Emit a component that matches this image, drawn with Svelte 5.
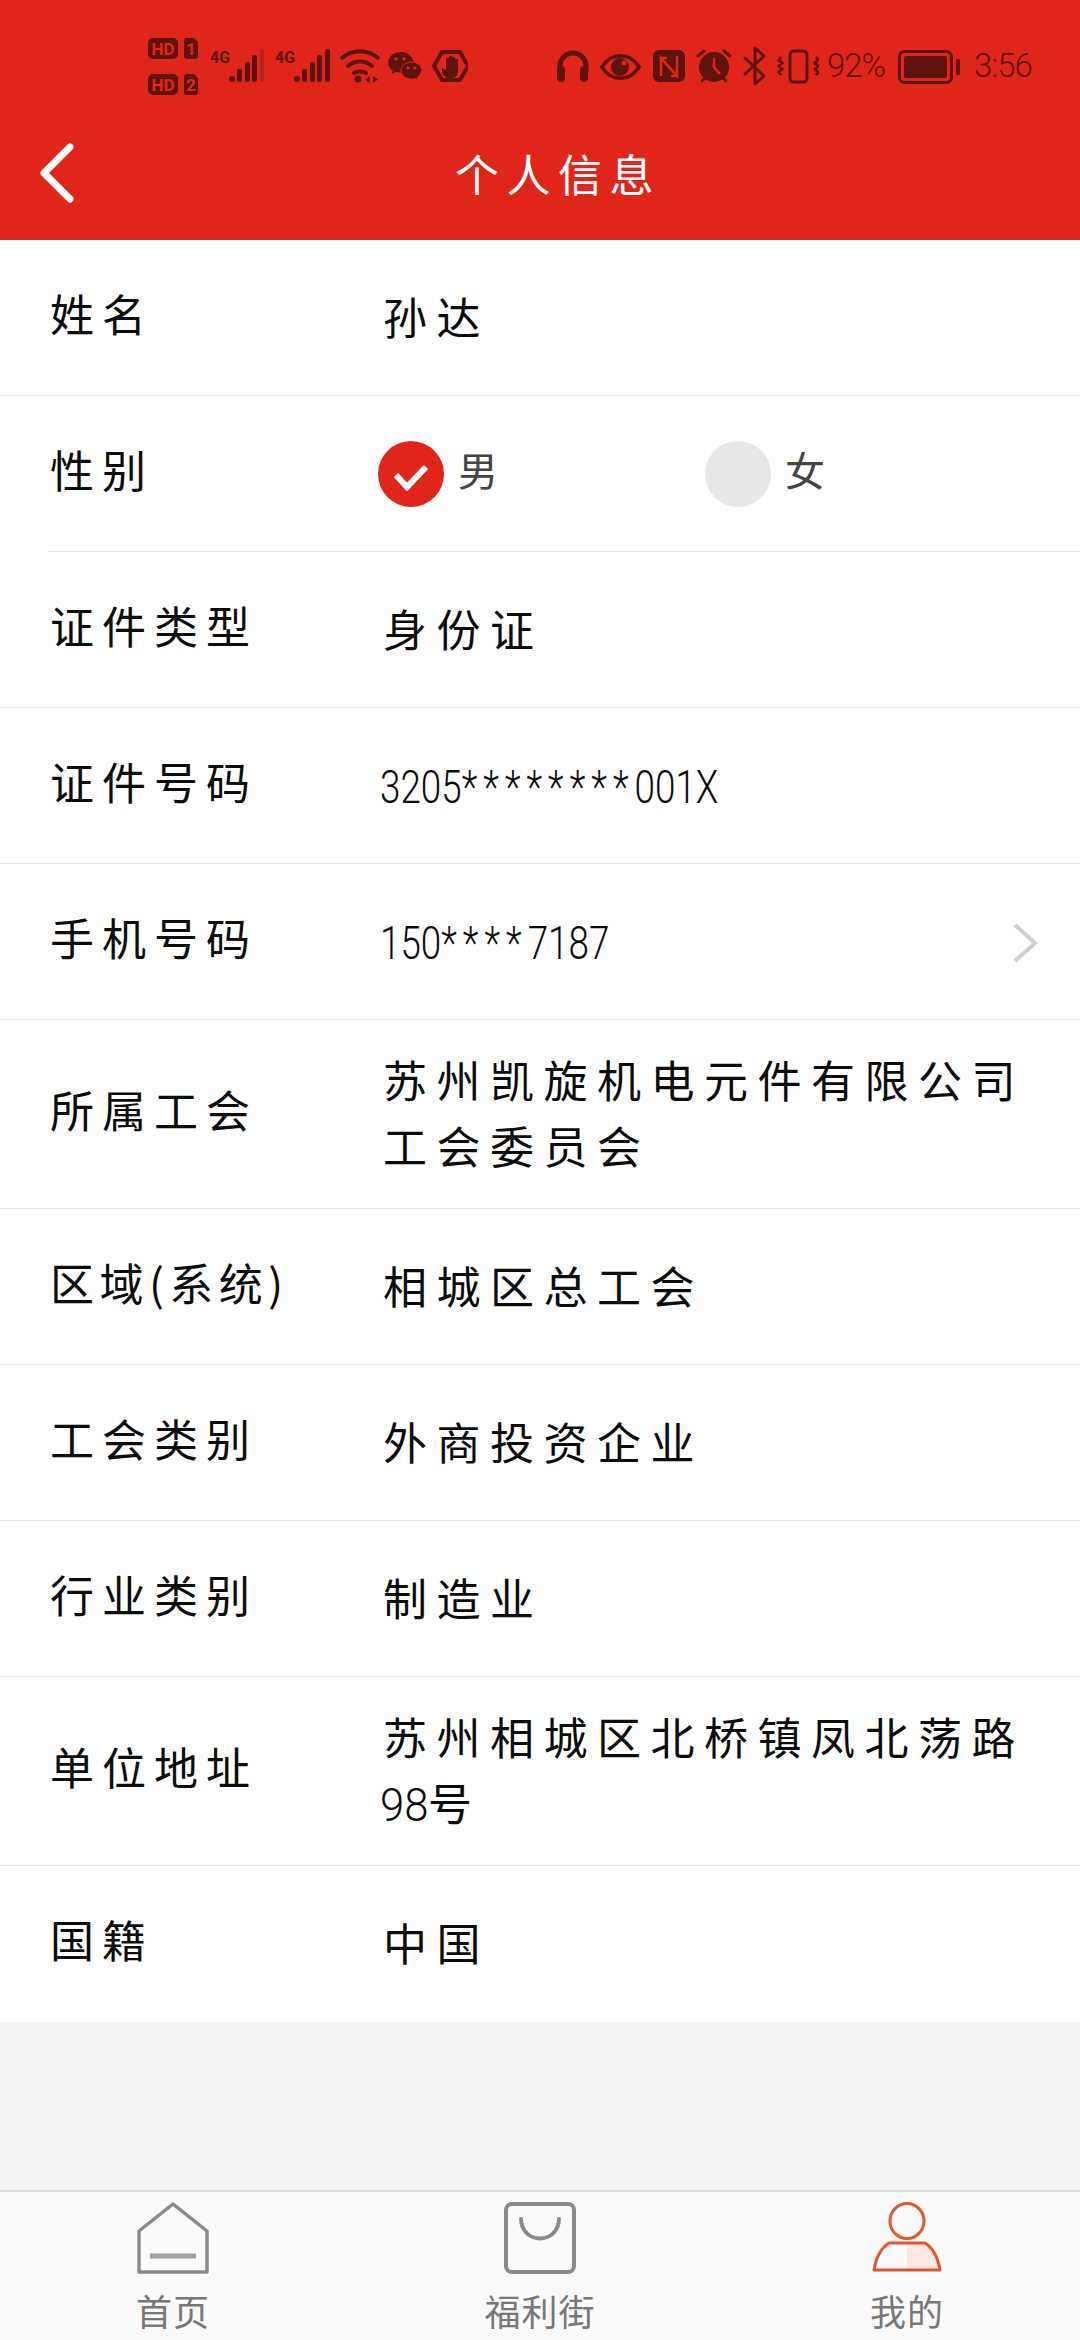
<script lang="ts">
type Row = { label: string; value?: string; num?: boolean; more?: boolean; inset?: boolean; gender?: boolean };

const rows: Row[] = [
  { label: '姓名', value: '孙达' },
  { label: '性别', gender: true, inset: true },
  { label: '证件类型', value: '身份证' },
  { label: '证件号码', value: '3205********001X', num: true },
  { label: '手机号码', value: '150****7187', num: true, more: true },
  { label: '所属工会', value: '苏州凯旋机电元件有限公司工会委员会' },
  { label: '区域(系统)', value: '相城区总工会' },
  { label: '工会类别', value: '外商投资企业' },
  { label: '行业类别', value: '制造业' },
  { label: '单位地址', value: '苏州相城区北桥镇凤北荡路98号' },
  { label: '国籍', value: '中国' },
];

// digits keep the narrow latin face without the wide CJK tracking
const parts = (v: string) => v.split(/(\d+)/).filter(Boolean);
// masked ids: the stars sit wider apart than the digits
const masked = (v: string) => v.split(/(\*+)/).filter(Boolean);
</script>

<div class="page">
  <header class="top">
    <div class="status">
      <svg class="left" width="320" height="60" viewBox="148 36 320 60" fill="#5e130c">
        <rect x="148" y="38" width="30" height="21" rx="5" />
        <text x="163" y="54.500" class="hd">HD</text>
        <path d="M184 41a3 3 0 0 1 3-3h7l4 4v14a3 3 0 0 1-3 3h-8a3 3 0 0 1-3-3z" />
        <text x="191" y="54.500" class="hd">1</text>
        <rect x="148" y="74" width="30" height="21" rx="5" />
        <text x="163" y="90.500" class="hd">HD</text>
        <path d="M184 77a3 3 0 0 1 3-3h7l4 4v14a3 3 0 0 1-3 3h-8a3 3 0 0 1-3-3z" />
        <text x="191" y="90.500" class="hd">2</text>
        <text x="220" y="63" class="g">4G</text>
        <circle cx="232" cy="79" r="3" />
        <rect x="237" y="69" width="5" height="13" rx="2" />
        <rect x="245" y="62" width="5" height="20" rx="2" />
        <rect x="252" y="55" width="5" height="27" rx="2" />
        <rect x="260" y="49" width="4" height="33" rx="2" opacity=".25" />
        <text x="285" y="63" class="g">4G</text>
        <circle cx="297" cy="79" r="3" />
        <rect x="302" y="69" width="5" height="13" rx="2" />
        <rect x="310" y="62" width="5" height="20" rx="2" />
        <rect x="317" y="55" width="5" height="27" rx="2" />
        <rect x="325" y="49" width="5" height="33" rx="2" />
        <g fill="none" stroke="#5e130c" stroke-width="4" stroke-linecap="round">
          <path d="M342 58c10-9 26-9 36 0" />
          <path d="M348 66c7-6 17-6 24 0" />
          <path d="M354 73c3-2 9-2 12 0" />
        </g>
        <circle cx="358" cy="79" r="3.500" />
        <path d="M370 76v7l-5-3.500zM373 76v7l5-3.500z" />
        <path d="M401 52c-7.500 0-13 4.800-13 10.500 0 3.300 1.800 6 4.700 8l-1.200 3.700 4.300-2.300c1.500.4 3.200.6 5.200.6-1-6.500 5-11.500 12.500-10.500-1-5.500-6-10-12.500-10z" />
        <path d="M422 70.500c0-4.700-4.700-8.500-10.500-8.500s-10.500 3.800-10.500 8.500 4.700 8.500 10.500 8.500c1.300 0 2.600-.2 3.700-.6l3.300 1.800-.9-3c2.400-1.600 3.900-3.900 3.900-6.700z" stroke="#e0261a" stroke-width="1" />
        <g fill="#e0261a">
          <circle cx="396" cy="59" r="1.800" /><circle cx="404" cy="59" r="1.800" />
          <circle cx="408" cy="68" r="1.600" /><circle cx="415" cy="68" r="1.600" />
        </g>
        <path d="M434 66l8-14h18l8 14-8 14h-18z" fill="none" stroke="#5e130c" stroke-width="4" stroke-linejoin="round" />
        <path d="M442 68l4 2v-11a1.500 1.500 0 0 1 3 0v-2a1.500 1.500 0 0 1 3 0v1a1.500 1.500 0 0 1 3 0v2a1.500 1.500 0 0 1 3 0v11c0 4-2 7-6 7h-3c-3 0-5-2-7-5z" />
      </svg>
      <svg class="right" width="262" height="60" viewBox="557 36 262 60">
        <path d="M560 70v-4a13 13 0 0 1 26 0v4" fill="none" stroke="#5e130c" stroke-width="5" stroke-linecap="round" />
        <rect x="557" y="66" width="8" height="16" rx="4" fill="#5e130c" />
        <rect x="580" y="66" width="8" height="16" rx="4" fill="#5e130c" />
        <path d="M602 67c9-15 28-15 37 0-9 15-28 15-37 0z" fill="none" stroke="#5e130c" stroke-width="3.500" />
        <circle cx="620" cy="67" r="9" fill="#5e130c" />
        <circle cx="624" cy="63" r="2.500" fill="#e0261a" />
        <rect x="653" y="50" width="32" height="32" rx="6" fill="#5e130c" />
        <path d="M661 76V58l16 18V56M661 58h6M677 76h-6" fill="none" stroke="#e0261a" stroke-width="2.500" />
        <circle cx="714" cy="67" r="15" fill="#5e130c" />
        <path d="M714 58v9l6 7" fill="none" stroke="#e0261a" stroke-width="2.500" />
        <path d="M698 56l6-5M730 56l-6-5M702 81l3-3M726 81l-3-3" stroke="#5e130c" stroke-width="3" stroke-linecap="round" />
        <path d="M745 58l19 18-9 8V48l9 8-19 18" fill="none" stroke="#5e130c" stroke-width="3" stroke-linejoin="round" stroke-linecap="round" />
        <rect x="790" y="51" width="17" height="31" rx="4" fill="none" stroke="#5e130c" stroke-width="3" />
        <path d="M781 57l-2 3 3 3-3 3 3 3-3 3 2 3M816 57l2 3-3 3 3 3-3 3 3 3-2 3" fill="none" stroke="#5e130c" stroke-width="3" />
      </svg>
      <span class="pct">92%</span>
      <svg class="batt" width="63" height="34" viewBox="0 0 63 34">
        <rect x="1.500" y="1.500" width="52" height="31" rx="5" fill="none" stroke="#5e130c" stroke-width="3" />
        <rect x="6" y="6" width="43" height="22" rx="2" fill="#5e130c" />
        <rect x="58" y="9" width="4" height="16" rx="1.500" fill="#5e130c" />
      </svg>
      <span class="time">3:56</span>
    </div>
    <div class="bar">
      <svg class="back" width="34" height="60" viewBox="0 0 34 60">
        <path d="M30 4L4 30l26 26" fill="none" stroke="#fff" stroke-width="7" stroke-linecap="round" stroke-linejoin="round" />
      </svg>
      <h1>个人信息</h1>
    </div>
  </header>

  <main>
    {#each rows as row}
      <div class="row" class:inset={row.inset}>
        <span class="label" class:tight={row.label.includes('(')}>{row.label}</span>
        {#if row.gender}
          <div class="genders">
            <span class="opt">
              <svg width="66" height="66" viewBox="0 0 66 66">
                <circle cx="33" cy="33" r="33" fill="#e0261a" />
                <path d="M18 34l11 12 19-20" fill="none" stroke="#fff" stroke-width="6" />
              </svg>
              <span class="opt-text">男</span>
            </span>
            <span class="opt">
              <svg width="66" height="66" viewBox="0 0 66 66">
                <circle cx="33" cy="33" r="33" fill="#e6e7e9" />
              </svg>
              <span class="opt-text">女</span>
            </span>
          </div>
        {:else}
          <div class="value">
            {#if row.num}
              <span class="num">{#each masked(row.value ?? '') as p}{#if p[0] === '*'}<span class="stars">{p}</span>{:else}{p}{/if}{/each}</span>
            {:else}
              {#each parts(row.value ?? '') as p}
                {#if /^\d/.test(p)}<span class="num short">{p}</span>{:else}{p}{/if}
              {/each}
            {/if}
          </div>
        {/if}
        {#if row.more}
          <svg class="more" width="26" height="40" viewBox="0 0 26 40">
            <path d="M3 2l20 18L3 38" fill="none" stroke="#cfcfcf" stroke-width="4" />
          </svg>
        {/if}
      </div>
    {/each}
  </main>

  <div class="gap"></div>

  <nav class="tabs">
    <div class="tab">
      <svg width="72" height="72" viewBox="0 0 72 72" fill="none" stroke="#8a8a8a" stroke-width="3.500">
        <path d="M36 2L2 29v41h68V29z" stroke-linejoin="round" />
        <path d="M13 54h46" stroke-width="5" stroke="#a0a0a0" />
      </svg>
      <span>首页</span>
    </div>
    <div class="tab">
      <svg width="72" height="72" viewBox="0 0 72 72" fill="none" stroke="#8a8a8a" stroke-width="4">
        <rect x="2" y="2" width="68" height="68" rx="6" />
        <path d="M17 17c1 26 37 26 38 0" stroke-linecap="round" />
      </svg>
      <span>福利街</span>
    </div>
    <div class="tab on">
      <svg width="72" height="72" viewBox="0 0 72 72" fill="none" stroke="#e4572e" stroke-width="3">
        <path d="M36 40h20c6 5 11 15 14 28H36z" fill="#fde8e4" stroke="none" />
        <ellipse cx="36" cy="19" rx="17" ry="17.500" />
        <path d="M18 41h36c8 5 13 15 15 27H3c2-12 7-22 15-27z" stroke-linejoin="round" />
      </svg>
      <span>我的</span>
    </div>
  </nav>
</div>

<style>
  :global(body) {
    margin: 0;
    background: #fff;
  }
  .page {
    width: 1080px;
    height: 2340px;
    display: flex;
    flex-direction: column;
    font-family: "Noto Sans CJK SC", sans-serif;
    color: #0c0c0c;
  }

  .top {
    height: 240px;
    background: #e0261a;
    flex: none;
  }
  .status {
    height: 100px;
    box-sizing: border-box;
    padding: 36px 0 0 148px;
    display: flex;
    align-items: flex-start;
    color: #5e130c;
  }
  .left,
  .right {
    flex: none;
  }
  .right {
    margin-left: 89px;
  }
  .hd {
    font: 700 17px "Roboto", sans-serif;
    text-anchor: middle;
    fill: #e0261a;
  }
  .g {
    font: 700 16px "Roboto", sans-serif;
    text-anchor: middle;
  }
  .pct,
  .time {
    font: 300 33px "Roboto", sans-serif;
    line-height: 60px;
    letter-spacing: -1px;
  }
  .pct {
    margin-left: 8px;
  }
  .batt {
    margin: 14px 0 0 13px;
  }
  .time {
    margin-left: 13px;
  }

  .bar {
    height: 140px;
    box-sizing: border-box;
    padding: 6px 0 0 40px;
    display: flex;
    align-items: center;
  }
  h1 {
    margin: 0 0 0 381px;
    font-size: 44px;
    font-weight: 400;
    letter-spacing: 7.500px;
    color: #fff;
  }

  .row {
    min-height: 156px;
    box-sizing: border-box;
    padding: 23px 42px 33px 50px;
    display: flex;
    align-items: center;
    border-bottom: 1px solid #e8e8e8;
    background: #fff;
    position: relative;
  }
  .row:last-child {
    border-bottom: none;
  }
  .row.inset {
    border-bottom: none;
  }
  .row.inset::after {
    content: "";
    position: absolute;
    left: 48px;
    right: 0;
    bottom: 0;
    height: 1px;
    background: #e8e8e8;
  }
  .label {
    width: 333px;
    flex: none;
    font-size: 44px;
    letter-spacing: 8px;
  }
  .label.tight {
    letter-spacing: 5.500px;
  }
  .value {
    flex: 1;
    margin: 3px 0 -3px;
    font-size: 44px;
    line-height: 66px;
    letter-spacing: 9.500px;
  }
  .num {
    display: inline-block;
    margin-left: -3px;
    font-family: "Roboto", sans-serif;
    font-weight: 300;
    font-size: 46px;
    line-height: 40px;
    letter-spacing: 0;
    white-space: nowrap;
    transform: scaleX(0.8);
    transform-origin: left center;
  }
  .stars {
    letter-spacing: 7.500px;
  }
  .num.short {
    margin-right: -3px;
    transform: scaleX(0.95);
  }
  .genders {
    margin: 10px 0 0 -5px;
    display: flex;
  }
  .opt {
    width: 327px;
    display: flex;
    align-items: center;
    gap: 14px;
    font-size: 40px;
    color: #444;
  }
  .opt-text {
    padding-bottom: 10px;
  }
  .more {
    flex: none;
    margin-top: 12px;
  }

  .gap {
    flex: 1;
    background: #f4f4f4;
  }

  .tabs {
    height: 150px;
    flex: none;
    box-sizing: border-box;
    border-top: 2px solid #dcdcdc;
    background: #fafafa;
    padding: 10px 118px 0;
    display: flex;
    justify-content: space-between;
  }
  .tab {
    width: 110px;
    display: flex;
    flex-direction: column;
    align-items: center;
    gap: 16px;
    font-size: 36px;
    line-height: 40px;
    letter-spacing: 1px;
    color: #777;
    white-space: nowrap;
  }
</style>
